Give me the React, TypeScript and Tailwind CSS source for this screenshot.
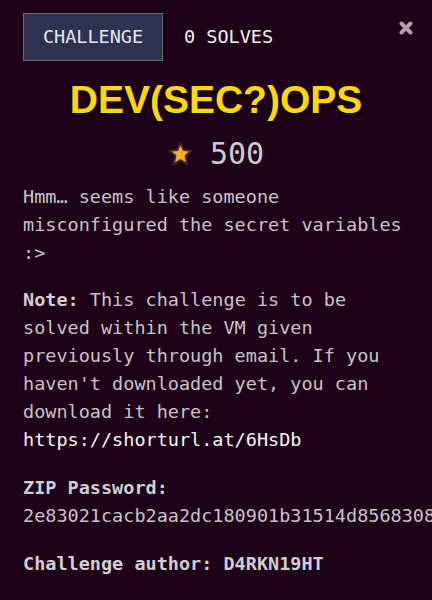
import React from "react";

const mono = "font-['DejaVu_Sans_Mono',monospace]";

export default function App() {
  return (
    <div className={`w-[432px] h-[600px] overflow-hidden bg-[#1e0119] ${mono} text-[18.5px] leading-[28px] text-[#c9c3c9]`}>
      <div className="relative px-[23px] pt-[13px]">
        <div className="flex items-center gap-[21px]">
          <div className="w-[140px] h-[48px] flex items-center justify-center bg-[#2d3350] border border-[#6a6a6e] text-[#e6e6ee]">
            CHALLENGE
          </div>
          <div className="text-[#f2f2f2]">0 SOLVES</div>
        </div>
        <svg className="absolute left-[399px] top-[21px]" width="14" height="14" viewBox="0 0 14 14">
          <path d="M2.5 2.5 L11.5 11.5 M11.5 2.5 L2.5 11.5" stroke="#ad9fad" strokeWidth="4" strokeLinecap="round" />
        </svg>

        <h1 className="mt-[19px] text-center font-['Liberation_Sans',Arial,sans-serif] font-bold text-[39px] leading-[39px] text-[#ffd800] [text-shadow:2px_2px_3px_#000]">
          DEV(SEC?)OPS
        </h1>

        <div className="mt-[20px] flex items-center justify-center gap-[17px]">
          <svg className="shrink-0" width="25" height="24" viewBox="0 0 25 24">
            <path
              d="M12.5 1.2 L15.7 8 L23.4 8.7 L17.6 13.8 L19.3 22.4 L12.5 18.2 L5.7 22.4 L7.4 13.8 L1.6 8.7 L9.3 8 Z"
              fill="#fbae25"
              stroke="#332b2c"
              strokeWidth="2"
              strokeLinejoin="round"
            />
          </svg>
          <span className="text-[30px] leading-[30px] text-[#cfcacf]">500</span>
        </div>

        <p className="mt-[14px]">
          Hmm… seems like someone misconfigured the secret variables :&gt;
        </p>

        <p className="mt-[18.6px]">
          <b className="text-[#d2ced2]">Note:</b> This challenge is to be solved within the VM given
          previously through email. If you haven't downloaded yet, you can download it here:{" "}
          <span className="text-[#f6f6f6]">https://shorturl.at/6HsDb</span>
        </p>

        <p className="mt-[20.4px]">
          <b className="text-[#d2ced2]">ZIP Password:</b>
          <br />
          <span className="whitespace-nowrap">2e83021cacb2aa2dc180901b31514d8568308</span>
        </p>

        <p className="mt-[19.6px] font-bold text-[#d2ced2]">Challenge author: D4RKN19HT</p>
      </div>
    </div>
  );
}
